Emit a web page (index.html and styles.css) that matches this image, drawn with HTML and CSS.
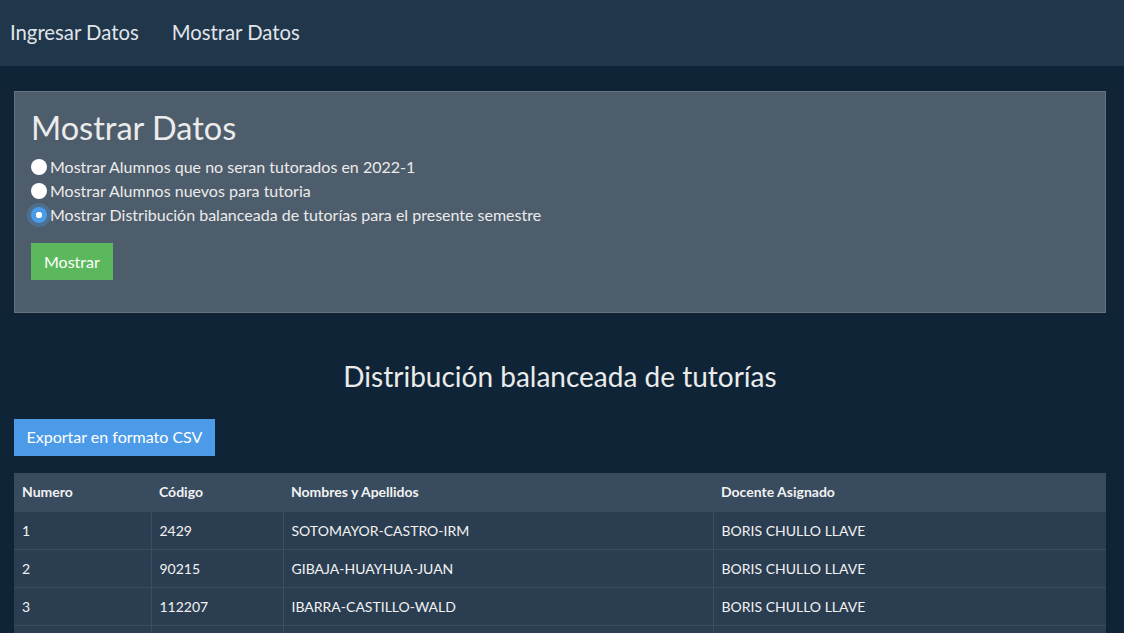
FILE: index.html
```html
<!DOCTYPE html>
<html lang="es">
<head>
<meta charset="utf-8">
<title>Mostrar Datos</title>
<link rel="stylesheet" href="styles.css">
</head>
<body>
<nav class="navbar">
  <a class="nav-link" href="#">Ingresar Datos</a>
  <a class="nav-link" href="#">Mostrar Datos</a>
</nav>
<main class="container">
  <section class="card">
    <h2 class="card-title">Mostrar Datos</h2>
    <form class="options">
      <label class="option"><input type="radio" name="op" class="radio"><span>Mostrar Alumnos que no seran tutorados en 2022-1</span></label>
      <label class="option"><input type="radio" name="op" class="radio"><span>Mostrar Alumnos nuevos para tutoria</span></label>
      <label class="option"><input type="radio" name="op" class="radio" checked><span>Mostrar Distribución balanceada de tutorías para el presente semestre</span></label>
      <button type="button" class="btn btn-success">Mostrar</button>
    </form>
  </section>
  <h3 class="section-title">Distribución balanceada de tutorías</h3>
  <button type="button" class="btn btn-primary">Exportar en formato CSV</button>
  <table class="table">
    <colgroup>
      <col class="c1"><col class="c2"><col class="c3"><col class="c4">
    </colgroup>
    <thead>
      <tr><th>Numero</th><th>Código</th><th>Nombres y Apellidos</th><th>Docente Asignado</th></tr>
    </thead>
    <tbody>
      <tr><td>1</td><td>2429</td><td>SOTOMAYOR-CASTRO-IRM</td><td>BORIS CHULLO LLAVE</td></tr>
      <tr><td>2</td><td>90215</td><td>GIBAJA-HUAYHUA-JUAN</td><td>BORIS CHULLO LLAVE</td></tr>
      <tr><td>3</td><td>112207</td><td>IBARRA-CASTILLO-WALD</td><td>BORIS CHULLO LLAVE</td></tr>
      <tr class="last"><td></td><td></td><td></td><td></td></tr>
    </tbody>
  </table>
</main>
</body>
</html>
```
FILE: styles.css
```css
* { box-sizing: border-box; }
html, body { margin: 0; padding: 0; }
body {
  background: #0f2537;
  color: #ebebeb;
  font-family: Lato, "Liberation Sans", sans-serif;
  font-size: 16px;
  line-height: 1.5;
}
.navbar {
  height: 66px;
  background: #20364b;
  display: flex;
  align-items: center;
  padding: 0 10px 2px;
  gap: 33px;
}
.nav-link {
  color: #e1e5e9;
  text-decoration: none;
  font-size: 20.3px;
}
.container {
  padding: 25px 18px 0 14px;
}
.card {
  background: #4e5d6c;
  border: 1px solid #66737f;
  padding: 16px 16px 32px 16px;
  height: 222px;
}
.card-title {
  margin: 0 0 8px 0;
  font-weight: 400;
  font-size: 32.5px;
  line-height: 1.2;
  color: #ebebeb;
}
.options {
  display: flex;
  flex-direction: column;
  align-items: flex-start;
}
.option {
  display: flex;
  align-items: center;
  height: 24px;
  font-size: 16px;
  color: #ebebeb;
}
.radio {
  appearance: none;
  -webkit-appearance: none;
  width: 16px;
  height: 16px;
  margin: 0 3px 0 0;
  border-radius: 50%;
  background: #fff;
  flex: none;
}
.radio:checked {
  background: #4c9be8;
  box-shadow: 0 0 0 4px rgba(76, 155, 232, 0.3);
  background-image: radial-gradient(circle, #fff 0 3px, transparent 3.5px);
}
.btn {
  border: none;
  font-family: Lato, "Liberation Sans", sans-serif;
  font-size: 16px;
  line-height: 1.5;
  color: #fff;
  padding: 6.5px 13px;
  border-radius: 0;
  cursor: pointer;
}
.btn-success {
  background: #5cb85c;
  margin-top: 16px;
}
.btn-primary {
  background: #4c9be8;
  display: block;
  padding: 6.5px 12.5px;
}
.section-title {
  text-align: center;
  font-weight: 400;
  font-size: 28px;
  line-height: 1.2;
  margin: 47px 0 25px;
  color: #ebebeb;
}
.table {
  width: 100%;
  margin-top: 17px;
  border-collapse: collapse;
  font-size: 14px;
}
.c1 { width: 137px; }
.c2 { width: 132px; }
.c3 { width: 430px; }
.table th {
  background: #384b5f;
  text-align: left;
  font-weight: 700;
  height: 39px;
  padding: 0 8px;
  color: #f2f2f2;
}
.table td {
  background: #2b3e51;
  height: 38px;
  padding: 0 8px;
  border-top: 1px solid #3a4d61;
  border-left: 1px solid #3a4d61;
  color: #f2f2f2;
}
.table td:first-child { border-left: none; }
```
